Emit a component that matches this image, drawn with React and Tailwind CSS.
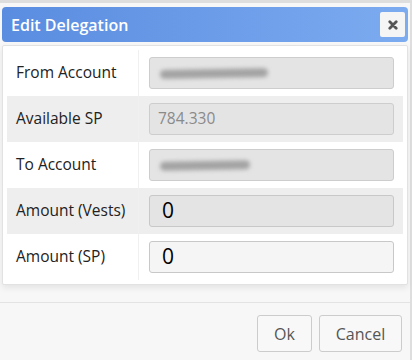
const rows = [
  { label: "From Account", kind: "blur", w: "w-[108px]" },
  { label: "Available SP", kind: "value", value: "784.330" },
  { label: "To Account", kind: "blur", w: "w-[90px]" },
  { label: "Amount (Vests)", kind: "number", value: "0", dim: true },
  { label: "Amount (SP)", kind: "number", value: "0" },
];

const Field = ({ row }) => {
  if (row.kind === "blur") {
    return (
      <div className="h-[32px] rounded-[3px] border border-[#cdcdcd] bg-[#e4e4e4] flex items-center pl-[10px]">
        <div className={`h-[9px] ${row.w} rounded-full bg-[#a3a3a3] blur-[2px] -rotate-1`}></div>
      </div>
    );
  }
  if (row.kind === "value") {
    return (
      <div className="h-[32px] rounded-[3px] border border-[#cdcdcd] bg-[#e4e4e4] flex items-center pl-[8px] text-[15.5px] text-[#8a8a8a]">
        {row.value}
      </div>
    );
  }
  return (
    <div
      className={`h-[32px] rounded-[3px] border border-[#c8c8c8] flex items-center pl-[12px] text-[21px] text-black ${
        row.dim ? "bg-[#e4e4e4]" : "bg-[#f5f5f5]"
      }`}
    >
      {row.value}
    </div>
  );
};

export default function App() {
  return (
    <div
      className="w-[412px] h-[360px] overflow-hidden bg-[#dedede] pt-[3px]"
      style={{ fontFamily: '"Open Sans", "Noto Sans", sans-serif' }}
    >
      <div className="w-[410px] h-[357px] bg-[#f7f7f7] px-[2px] pt-[4px]">
        {/* header */}
        <div className="h-[35px] rounded-[4px] bg-gradient-to-r from-[#5a8ce0] to-[#7cabf0] flex items-center justify-between pl-[9px] pr-[3px]">
          <span className="text-[16px] font-semibold text-white">Edit Delegation</span>
          <button className="w-[25px] h-[25px] rounded-[2px] bg-[#f5f5f5] flex items-center justify-center">
            <svg width="10" height="10" viewBox="0 0 10 10">
              <path d="M1.8 1.8 L8.2 8.2 M8.2 1.8 L1.8 8.2" stroke="#555" strokeWidth="2.8" strokeLinecap="round" />
            </svg>
          </button>
        </div>

        {/* table panel */}
        <div className="mt-[3px] bg-white border border-[#e2e2e2] rounded-[2px] shadow-[0_3px_6px_rgba(0,0,0,0.08)] p-[4px]">
          {rows.map((row, i) => (
            <div key={i} className={`flex h-[46px] ${i % 2 === 1 ? "bg-[#eeeeee]" : "bg-white"}`}>
              <div className="w-[132px] flex items-center pl-[9px] border-r border-[#f0f0f0] text-[15.5px] text-[#222]">
                {row.label}
              </div>
              <div className="flex-1 flex flex-col justify-center pl-[10px] pr-[9px]">
                <Field row={row} />
              </div>
            </div>
          ))}
        </div>

        {/* footer */}
        <div className="mt-[17px] -mx-[2px] border-t border-[#e3e3e3] flex justify-end gap-[7px] pt-[12px] pr-[8px]">
          <button className="w-[55px] h-[37px] rounded-[3px] border border-[#cccccc] bg-[#f8f8f8] text-[16px] text-[#555]">
            Ok
          </button>
          <button className="w-[83px] h-[37px] rounded-[3px] border border-[#cccccc] bg-[#f8f8f8] text-[16px] text-[#555]">
            Cancel
          </button>
        </div>
      </div>
    </div>
  );
}
